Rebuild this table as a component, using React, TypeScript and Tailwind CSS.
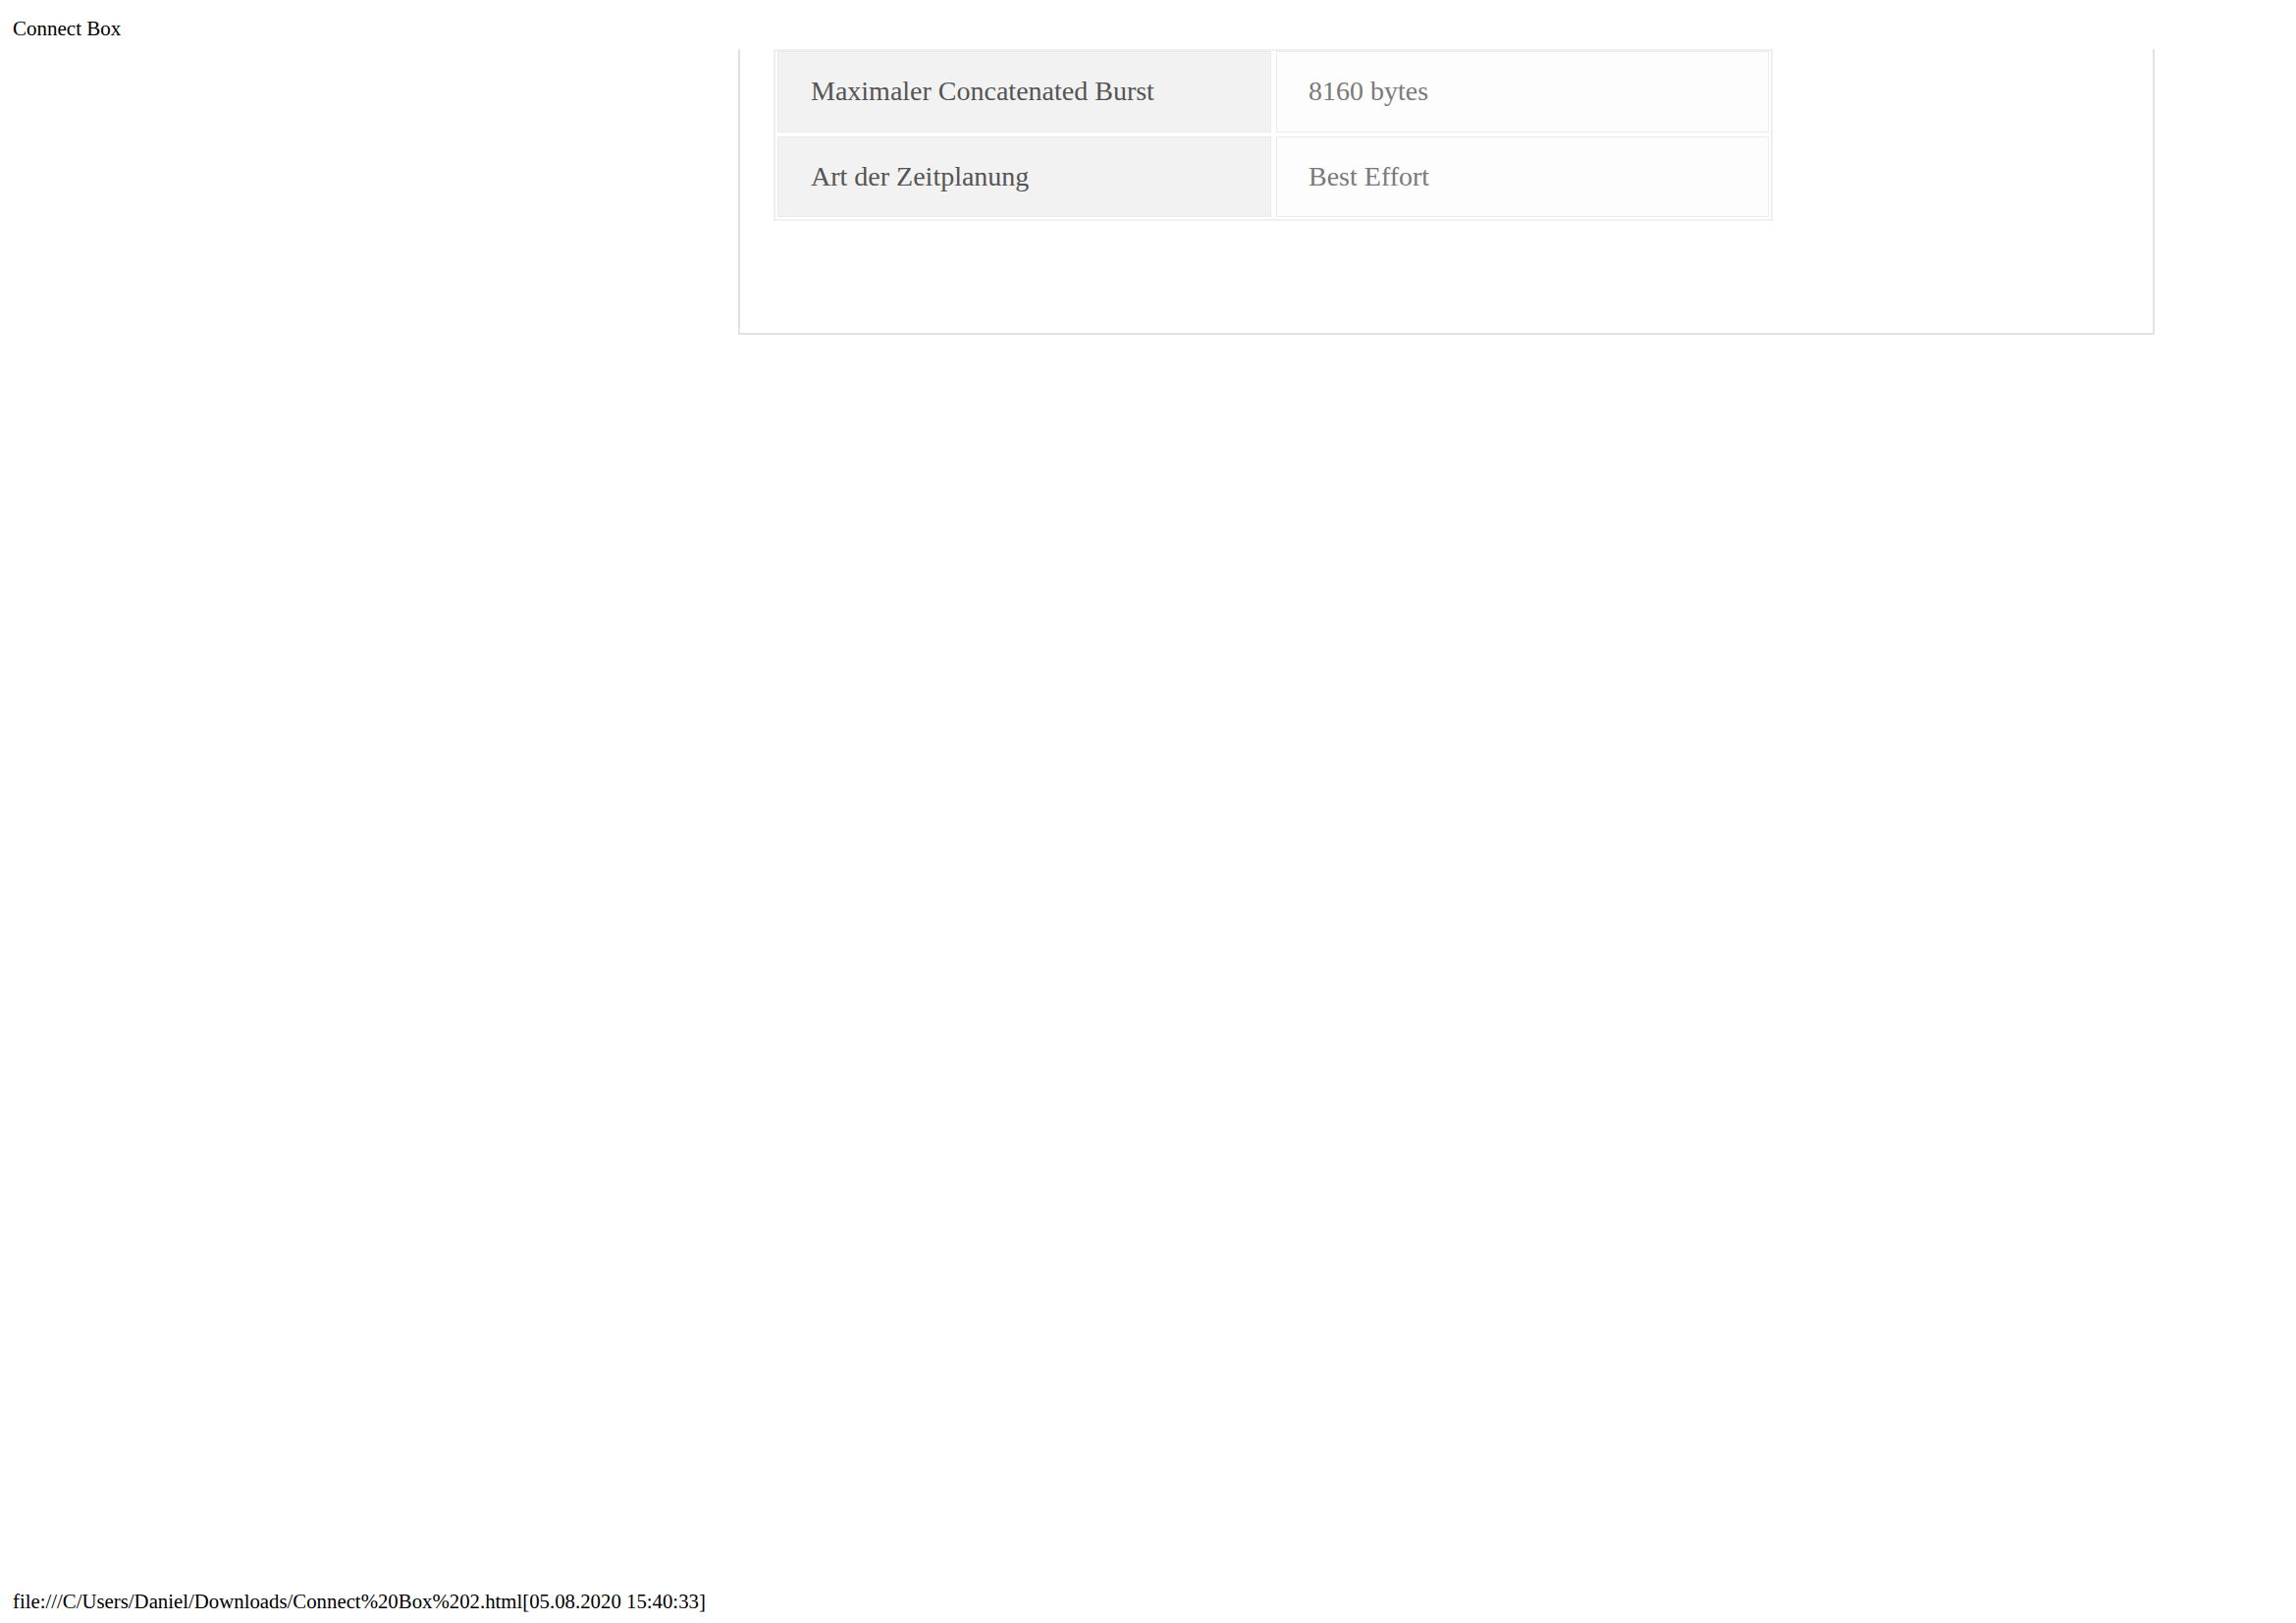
const rows = [
  { label: 'Maximaler Concatenated Burst', value: '8160 bytes', h: 'h-[83px] pb-[2px]' },
  { label: 'Art der Zeitplanung', value: 'Best Effort', h: 'h-[82px]' },
];

export default function App() {
  return (
    <div className="w-[2339px] h-[1653px] flex flex-col bg-white font-['Liberation_Serif','Times_New_Roman',serif]">
      <div className="h-[50px] pt-[17px] pl-[13px] text-[21px] leading-[24px] text-black">Connect Box</div>

      <div className="pl-[752px]">
        <div className="w-[1443px] border-x-2 border-b-2 border-[#e2e2e2] pl-[34px] pb-[114px]">
          <div className="w-[1018px] border-2 border-[#efefef] px-[2px] pb-[2px] grid grid-cols-[503px_502px] gap-x-[5px] gap-y-[4px]">
            {rows.map((r) => (
              <div key={r.label} className="contents">
                <div className={`${r.h} flex items-center pl-[33px] bg-[#f2f2f2] border border-[#eaeaea] text-[28px] text-[#555555]`}>
                  {r.label}
                </div>
                <div className={`${r.h} flex items-center pl-[32px] bg-[#fdfdfd] border border-[#ececec] text-[28px] text-[#7a7a7a]`}>
                  {r.value}
                </div>
              </div>
            ))}
          </div>
        </div>
      </div>

      <div className="mt-auto pl-[13px] pb-[10px] text-[20.8px] leading-[24px] text-black">
        file:///C/Users/Daniel/Downloads/Connect%20Box%202.html[05.08.2020 15:40:33]
      </div>
    </div>
  );
}
